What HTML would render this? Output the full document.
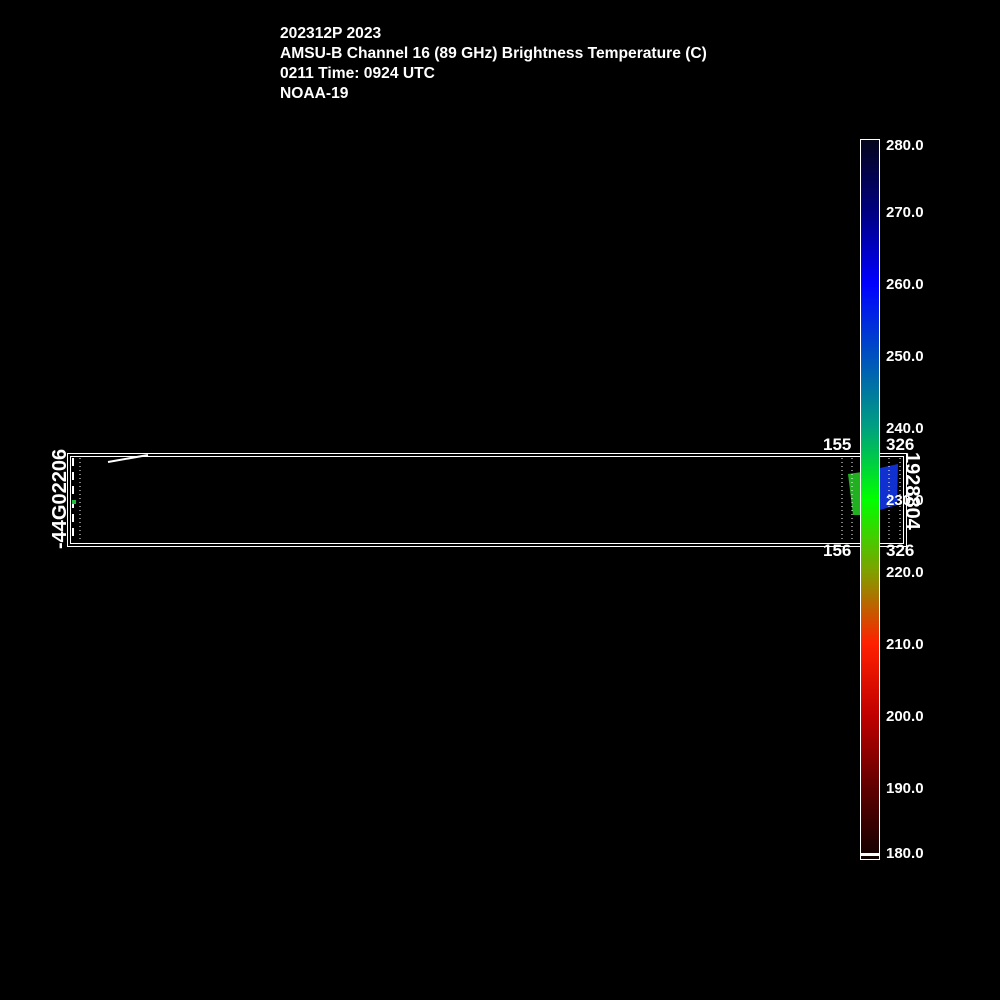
<!DOCTYPE html>
<html><head><meta charset="utf-8"><style>
html,body{margin:0;padding:0;background:#000;width:1000px;height:1000px;overflow:hidden;position:relative;font-family:"Liberation Sans",sans-serif;color:#fff}
.t{position:absolute;left:280px;font-size:15.6px;line-height:20px;white-space:nowrap;font-weight:bold}
.lab{position:absolute;left:886px;font-size:15px;line-height:16px;font-weight:bold}
</style></head><body>
<div class="t" style="top:24px">202312P 2023</div>
<div class="t" style="top:44px">AMSU-B Channel 16 (89 GHz) Brightness Temperature (C)</div>
<div class="t" style="top:64px">0211 Time: 0924 UTC</div>
<div class="t" style="top:84px">NOAA-19</div>

<svg width="1000" height="1000" style="position:absolute;left:0;top:0">
 <defs>
  <linearGradient id="g" x1="0" y1="0" x2="0" y2="1">
   <stop offset="0" stop-color="#05051a"/>
   <stop offset="0.1" stop-color="#000080"/>
   <stop offset="0.2" stop-color="#0000ff"/>
   <stop offset="0.3" stop-color="#0050c0"/>
   <stop offset="0.4" stop-color="#00a080"/>
   <stop offset="0.5" stop-color="#00ff00"/>
   <stop offset="0.6" stop-color="#80a000"/>
   <stop offset="0.7" stop-color="#ff2000"/>
   <stop offset="0.8" stop-color="#c00000"/>
   <stop offset="0.9" stop-color="#600000"/>
   <stop offset="1" stop-color="#100000"/>
  </linearGradient>
 </defs>
 <rect x="67.5" y="453.5" width="839" height="93" fill="none" stroke="#fff"/>
 <rect x="70.5" y="456.5" width="833" height="87" fill="none" stroke="#fff"/>
 <path d="M108 462 L148 455" stroke="#fff" stroke-width="2" fill="none"/>
 <line x1="80" y1="458" x2="80" y2="541" stroke="#fff" stroke-dasharray="1 3"/>
 <line x1="73" y1="458" x2="73" y2="541" stroke="#fff" stroke-width="2" stroke-dasharray="8 6"/>
 <rect x="72" y="500" width="4" height="4" fill="#20c040"/>
 <polygon points="848,474 862,472 862,515 853,515" fill="#20b020"/>
 <polygon points="880,468 898,464 897,505 880,510" fill="#1030d0"/>
 <line x1="842" y1="458" x2="842" y2="541" stroke="#fff" stroke-dasharray="1 3"/>
 <line x1="852" y1="458" x2="852" y2="541" stroke="#fff" stroke-dasharray="1 3"/>
 <line x1="889" y1="458" x2="889" y2="541" stroke="#fff" stroke-dasharray="1 3"/>
 <line x1="900" y1="458" x2="900" y2="541" stroke="#fff" stroke-dasharray="1 3"/>
 <rect x="860.5" y="139.5" width="19" height="720" fill="url(#g)" stroke="#fff"/>
 <rect x="861" y="853" width="18" height="3" fill="#fff"/>
 <g font-family="Liberation Sans" font-weight="bold" fill="#fff">
 <text x="823" y="450" font-size="17">155</text>
 <text x="886" y="450" font-size="17">326</text>
 <text x="823" y="556" font-size="17">156</text>
 <text x="886" y="556" font-size="17">326</text>
 <text transform="translate(66,549) rotate(-90)" font-size="20">-44G02206</text>
 <text transform="translate(906,452) rotate(90)" font-size="20">1928804</text>
 </g>
</svg>

<div class="lab" style="top:138px">280.0</div>
<div class="lab" style="top:205px">270.0</div>
<div class="lab" style="top:277px">260.0</div>
<div class="lab" style="top:349px">250.0</div>
<div class="lab" style="top:421px">240.0</div>
<div class="lab" style="top:493px">230.0</div>
<div class="lab" style="top:565px">220.0</div>
<div class="lab" style="top:637px">210.0</div>
<div class="lab" style="top:709px">200.0</div>
<div class="lab" style="top:781px">190.0</div>
<div class="lab" style="top:846px">180.0</div>
</body></html>
